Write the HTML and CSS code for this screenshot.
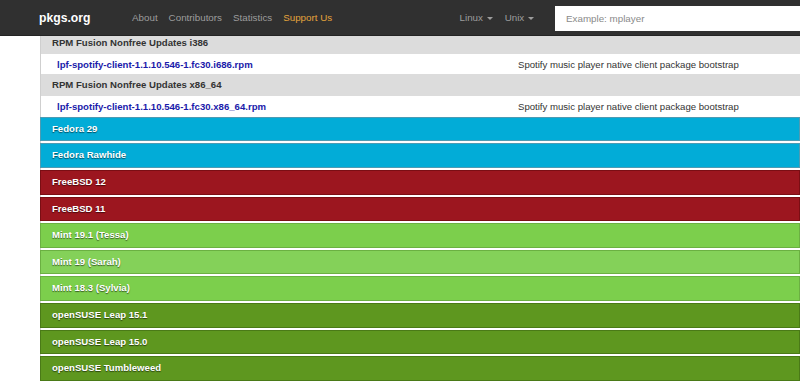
FILE: index.html
```html
<!DOCTYPE html>
<html lang="en">
<head>
    <meta charset="UTF-8">
    <title>pkgs.org</title>
    <link rel="stylesheet" href="styles.css">
</head>
<body>
    <nav class="navbar">
        <a class="brand" href="#">pkgs.org</a>
        <ul class="nav-links">
            <li><a href="#">About</a></li>
            <li><a href="#">Contributors</a></li>
            <li><a href="#">Statistics</a></li>
            <li><a href="#" class="support">Support Us</a></li>
        </ul>
        <ul class="nav-menus">
            <li><a href="#">Linux <span class="caret"></span></a></li>
            <li><a href="#">Unix <span class="caret"></span></a></li>
        </ul>
        <input type="text" class="search" placeholder="Example: mplayer">
    </nav>

    <div class="content">
        <div class="repo-head">RPM Fusion Nonfree Updates i386</div>
        <div class="pkg-row">
            <a href="#">lpf-spotify-client-1.1.10.546-1.fc30.i686.rpm</a>
            <span class="desc">Spotify music player native client package bootstrap</span>
        </div>
        <div class="repo-head">RPM Fusion Nonfree Updates x86_64</div>
        <div class="pkg-row">
            <a href="#">lpf-spotify-client-1.1.10.546-1.fc30.x86_64.rpm</a>
            <span class="desc">Spotify music player native client package bootstrap</span>
        </div>

        <div class="distro fedora">Fedora 29</div>
        <div class="distro fedora">Fedora Rawhide</div>
        <div class="distro freebsd">FreeBSD 12</div>
        <div class="distro freebsd">FreeBSD 11</div>
        <div class="distro mint">Mint 19.1 (Tessa)</div>
        <div class="distro mint light">Mint 19 (Sarah)</div>
        <div class="distro mint">Mint 18.3 (Sylvia)</div>
        <div class="distro opensuse">openSUSE Leap 15.1</div>
        <div class="distro opensuse">openSUSE Leap 15.0</div>
        <div class="distro opensuse">openSUSE Tumbleweed</div>
    </div>
</body>
</html>
```

FILE: styles.css
```css
body {
    margin: 0;
    font-family: "Liberation Sans", Arial, sans-serif;
    font-size: 9.6px;
    color: #333;
    background: #fff;
    overflow: hidden;
}
a {
    text-decoration: none;
}
ul {
    list-style: none;
    margin: 0;
    padding: 0;
}

/* top bar */
.navbar {
    position: fixed;
    top: 0;
    left: 0;
    right: 0;
    height: 35px;
    background-color: #303030;
    border-bottom: 1px solid #242424;
    display: flex;
    align-items: center;
    z-index: 10;
}
.brand {
    color: #fff;
    font-weight: bold;
    font-size: 12.2px;
    margin-left: 39px;
    width: 93px;
}
.nav-links, .nav-menus {
    display: flex;
    gap: 11px;
}
.nav-links a, .nav-menus a {
    color: #9d9d9d;
    font-size: 9.8px;
}
.nav-links a.support {
    color: #e3a33c;
}
.nav-menus {
    margin-left: auto;
    margin-right: 21px;
    gap: 12px;
}
.caret {
    display: inline-block;
    width: 0;
    height: 0;
    margin-left: 1px;
    vertical-align: middle;
    border-top: 3px solid #9d9d9d;
    border-left: 3px solid transparent;
    border-right: 3px solid transparent;
}
.search {
    width: 245px;
    height: 25px;
    box-sizing: border-box;
    border: none;
    padding: 0 11px;
    font-family: "Liberation Sans", Arial, sans-serif;
    font-size: 9.8px;
    margin-top: 1px;
}
.search::placeholder {
    color: #8a8a8a;
}

/* package list */
.content {
    margin: 32px 0 0 40px;
    border-left: 1px solid #cfcfcf;
}
.repo-head {
    background-color: #dcdcdc;
    font-weight: bold;
    height: 21.7px;
    line-height: 21.7px;
    padding-left: 11px;
}
.pkg-row {
    height: 20.7px;
    display: flex;
    align-items: center;
    background: #fff;
}
.pkg-row a {
    color: #1a1aaa;
    font-weight: bold;
    padding-left: 16px;
    width: 461px;
}
.distro {
    height: 24.6px;
    box-sizing: border-box;
    margin: 0 0 2px -1px;
    border: 1px solid;
    padding-left: 11px;
    line-height: 22.6px;
    color: #fff;
    font-weight: bold;
    text-shadow: 0 1px 1px rgba(0,0,0,0.55);
}
.fedora {
    background-color: #02acd7;
    border-color: #4d9bb3;
}
.freebsd {
    background-color: #9c161f;
    border-color: #7a0e14;
}
.mint {
    background-color: #7ccf4c;
    border-color: #6bb042;
}
.mint.light {
    background-color: #84d159;
}
.opensuse {
    background-color: #5e971f;
    border-color: #4a7a17;
}
```
